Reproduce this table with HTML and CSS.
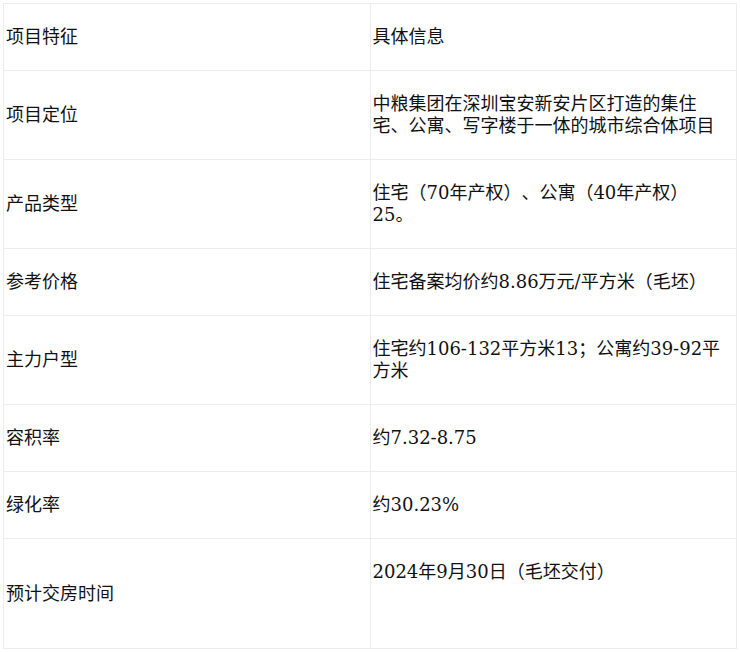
FILE: index.html
```html
<!DOCTYPE html>
<html lang="zh-CN">
<head>
<meta charset="utf-8">
<title>项目特征</title>
<link rel="stylesheet" href="styles.css">
</head>
<body>
<table class="info">
  <tbody>
    <tr><td>项目特征</td><td>具体信息</td></tr>
    <tr><td>项目定位</td><td>中粮集团在深圳宝安新安片区打造的集住宅、公寓、写字楼于一体的城市综合体项目</td></tr>
    <tr><td>产品类型</td><td>住宅（70年产权）、公寓（40年产权）25。</td></tr>
    <tr><td>参考价格</td><td>住宅备案均价约8.86万元/平方米（毛坯）</td></tr>
    <tr><td>主力户型</td><td>住宅约106-132平方米13；公寓约39-92平方米</td></tr>
    <tr><td>容积率</td><td>约7.32-8.75</td></tr>
    <tr><td>绿化率</td><td>约30.23%</td></tr>
    <tr><td>预计交房时间</td><td class="tall">2024年9月30日（毛坯交付）</td></tr>
  </tbody>
</table>
</body>
</html>
```
FILE: styles.css
```css
html, body {
  background: #ffffff;
}
body {
  margin: 3px;
  font-family: "DejaVu Serif", "Noto Sans CJK SC", serif;
  font-size: 18px;
  color: #111111;
  text-spacing-trim: space-all;
}
.info {
  width: 100%;
  border-collapse: collapse;
  table-layout: fixed;
}
.info td {
  width: 50%;
  border: 1px solid #ececec;
  padding: 22px 10px 22px 2px;
  line-height: 22px;
  vertical-align: middle;
  text-spacing-trim: space-all;
}
.info td.tall {
  vertical-align: top;
  padding-bottom: 65px;
}
```
